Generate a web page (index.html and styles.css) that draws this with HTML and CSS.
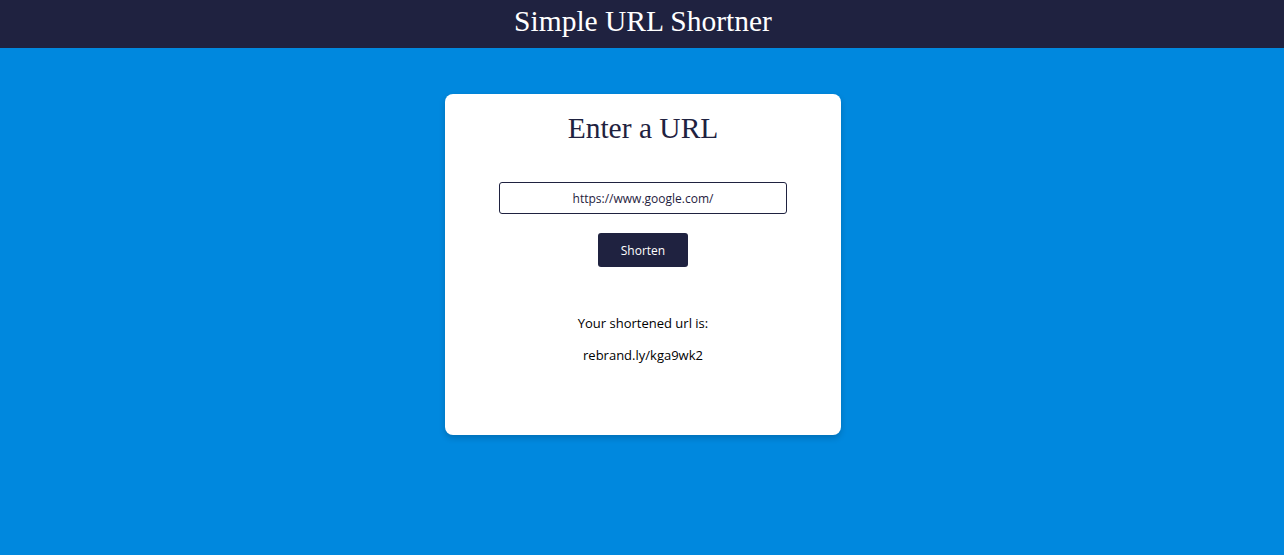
FILE: index.html
```html
<!DOCTYPE html>
<html>
<head>
<meta charset="utf-8">
<link rel="stylesheet" href="styles.css">
</head>
<body>
<header class="topbar">
  <h1 class="topbar-title">Simple URL Shortner</h1>
</header>
<main class="page">
  <section class="card">
    <h2 class="card-title">Enter a URL</h2>
    <input class="url-input" type="text" value="https://www.google.com/">
    <button class="shorten-btn">Shorten</button>
    <div class="result">
      <p class="result-label">Your shortened url is:</p>
      <p class="result-url">rebrand.ly/kga9wk2</p>
    </div>
  </section>
</main>
</body>
</html>
```

FILE: styles.css
```css
html, body {
  margin: 0;
  padding: 0;
}
body {
  background: #0088de;
  min-height: 555px;
  font-family: "Open Sans", "Noto Sans", sans-serif;
}
.topbar {
  background: #1f2240;
  height: 48px;
  display: flex;
  align-items: center;
  justify-content: center;
  padding-left: 2px;
}
.topbar-title {
  margin: 0;
  color: #ffffff;
  font-family: "Liberation Serif", serif;
  font-weight: normal;
  font-size: 29.5px;
  line-height: 1;
  padding-bottom: 5px;
}
.page {
  display: flex;
  justify-content: center;
  padding-top: 46px;
  padding-left: 2px;
}
.card {
  width: 396px;
  height: 341px;
  box-sizing: border-box;
  background: #ffffff;
  border-radius: 8px;
  box-shadow: 0 3px 6px rgba(0, 0, 0, 0.18);
  display: flex;
  flex-direction: column;
  align-items: center;
  padding-top: 17px;
}
.card-title {
  margin: 0;
  font-family: "Liberation Serif", serif;
  font-weight: normal;
  font-size: 29.5px;
  line-height: 35px;
  color: #1f2240;
}
.url-input {
  margin-top: 36px;
  width: 288px;
  height: 32px;
  box-sizing: border-box;
  border: 1px solid #1f2240;
  border-radius: 3px;
  text-align: center;
  font-family: "Open Sans", "Noto Sans", sans-serif;
  font-size: 12px;
  color: #1f2240;
  outline: none;
}
.shorten-btn {
  margin-top: 19px;
  width: 90px;
  height: 34px;
  border: none;
  border-radius: 3px;
  background: #1f2240;
  color: #ffffff;
  font-family: "Open Sans", "Noto Sans", sans-serif;
  font-size: 12px;
}
.result {
  margin-top: 47px;
  text-align: center;
  color: #000000;
  font-size: 13px;
}
.result-label {
  margin: 0;
  line-height: 18px;
}
.result-url {
  margin: 14px 0 0;
  line-height: 18px;
}
```
